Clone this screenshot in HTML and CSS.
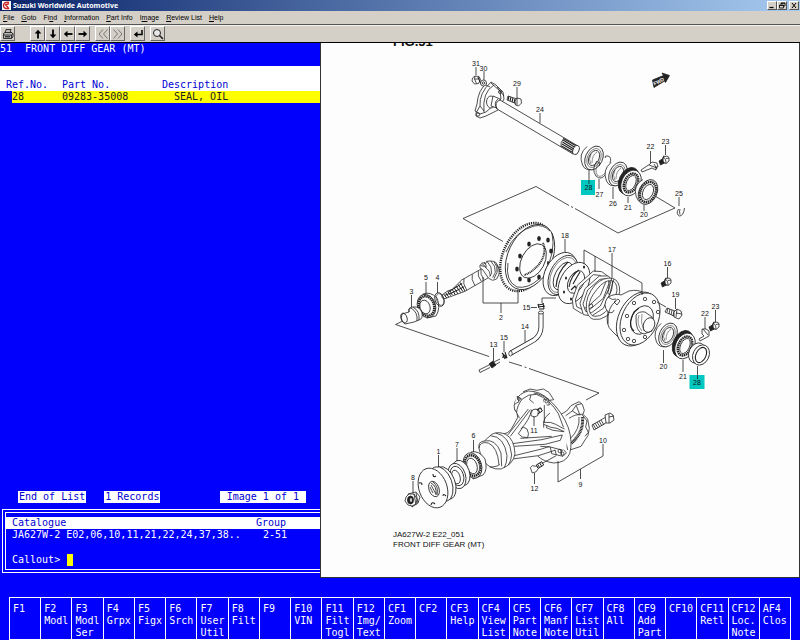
FILE: index.html
```html
<!DOCTYPE html>
<html lang="en">
<head>
  <meta charset="UTF-8">
  <meta name="viewport" content="width=device-width, initial-scale=1.0">
  <title>Suzuki Worldwide Automotive</title>
  <link rel="stylesheet" href="styles.css">
</head>
<body>
  <header class="titlebar">
    <svg class="app-icon" viewBox="0 0 9 9"><rect width="9" height="9" fill="#fff"/><path d="M7 1.5C4 .5 1.500 2 1.500 4.500S4 8 6 7.500M3 4l4-1.500M4 4l3 4" fill="none" stroke="#c22" stroke-width="1.400"/></svg>
    <h1>Suzuki Worldwide Automotive</h1>
    <div class="window-buttons">
      <button aria-label="Minimize"><svg viewBox="0 0 8 7"><path d="M1.500 5.500h4" stroke="#000" stroke-width="1.200"/></svg></button>
      <button aria-label="Restore"><svg viewBox="0 0 8 7"><path d="M3 2.500V1h4v3H5.500M1.500 3h4v3h-4zM1.500 3.500h4M3 1.300h4" fill="none" stroke="#000" stroke-width=".8"/></svg></button>
      <button class="close" aria-label="Close"><svg viewBox="0 0 8 7"><path d="M2 1l4 5M6 1L2 6" stroke="#000"/></svg></button>
    </div>
  </header>

  <nav class="menu">
    <a href="#"><u>F</u>ile</a>
    <a href="#"><u>G</u>oto</a>
    <a href="#">Fi<u>n</u>d</a>
    <a href="#"><u>I</u>nformation</a>
    <a href="#"><u>P</u>art Info</a>
    <a href="#">I<u>m</u>age</a>
    <a href="#"><u>R</u>eview List</a>
    <a href="#"><u>H</u>elp</a>
  </nav>

  <div class="toolbar">
    <div class="tool-group print">
      <button aria-label="Print"><svg viewBox="0 0 12 12"><path d="M3 5l1-3.500h5L8 5M1.500 5.500L3 4.500h7l1 1.500v3l-1.500 1.500h-8zM1.500 7h8L11 5.500M9.500 7v3.500" fill="#bbb" stroke="#222" stroke-width=".9"/><path d="M3 8.800h5" stroke="#000"/></svg></button>
    </div>
    <div class="tool-group">
      <button aria-label="Up"><svg viewBox="0 0 12 12"><path d="M6 10.500V4" stroke="#000" stroke-width="1.800"/><path d="M2.700 5.500L6 1.800l3.300 3.700z"/></svg></button>
      <button aria-label="Down"><svg viewBox="0 0 12 12"><path d="M6 1.500V8" stroke="#000" stroke-width="1.800"/><path d="M2.700 6.500L6 10.200l3.300-3.700z"/></svg></button>
      <button aria-label="Left"><svg viewBox="0 0 12 12"><path d="M10.500 6H4" stroke="#000" stroke-width="1.800"/><path d="M5.500 2.700L1.800 6l3.700 3.300z"/></svg></button>
      <button aria-label="Right"><svg viewBox="0 0 12 12"><path d="M1.500 6H8" stroke="#000" stroke-width="1.800"/><path d="M6.500 2.700L10.200 6 6.500 9.300z"/></svg></button>
    </div>
    <div class="tool-group">
      <button aria-label="Previous"><svg viewBox="0 0 12 12"><path d="M6 1.500L2 6l4 4.500M10.500 1.500L6.500 6l4 4.500" fill="none" stroke="#777"/></svg></button>
      <button aria-label="Next"><svg viewBox="0 0 12 12"><path d="M6 1.500L10 6l-4 4.500M1.500 1.500L5.500 6l-4 4.500" fill="none" stroke="#777"/></svg></button>
    </div>
    <div class="tool-group">
      <button aria-label="Enter"><svg viewBox="0 0 12 12"><path d="M10 2v4.500H4" fill="none" stroke="#000" stroke-width="1.500"/><path d="M5.500 3.500L1.800 6.500l3.700 3z"/></svg></button>
    </div>
    <div class="tool-group">
      <button aria-label="Search"><svg viewBox="0 0 12 12"><circle cx="5" cy="5" r="3.500" fill="#e8e8e8" stroke="#222"/><path d="M7.500 7.500l3.500 3.500" stroke="#222" stroke-width="1.600"/></svg></button>
    </div>
  </div>

  <main class="workspace">
    <section class="terminal">
      <h2><span>51</span><span>FRONT DIFF GEAR (MT)</span></h2>

      <table class="parts">
        <thead>
          <tr><th class="ref">Ref.No.</th><th class="part">Part No.</th><th>Description</th></tr>
        </thead>
        <tbody>
          <tr class="selected"><td class="ref">28</td><td class="part">09283-35008</td><td class="desc">SEAL, OIL</td></tr>
        </tbody>
      </table>

      <div class="status">
        <span>End of List</span>
        <span>1 Records</span>
        <span class="image-count">Image 1 of 1</span>
      </div>

      <form class="callout-box">
        <table class="catalogue">
          <thead><tr><th>Catalogue</th><th class="group">Group</th></tr></thead>
          <tbody><tr><td>JA627W-2 E02,06,10,11,21,22,24,37,38..</td><td class="group">2-51</td></tr></tbody>
        </table>
        <div class="prompt">
          <label for="callout">Callout&gt;</label>
          <input id="callout" type="text" autocomplete="off">
        </div>
      </form>
    </section>

    <section class="drawing">
      <svg viewBox="321 43 478 534" role="img" aria-label="Front diff gear (MT)">
        <defs>
          <g id="bearing">
            <path d="M-7-11.500Q-16-4-11.500 7Q-9 13-1 11.500" class="part-fill"/>
            <ellipse rx="8.500" ry="12.500" transform="rotate(25)" class="part-fill"/>
            <ellipse rx="6.500" ry="10" transform="rotate(25)" class="thin"/>
            <ellipse rx="5" ry="8" transform="rotate(25)" class="part-fill"/>
            <path d="M-3-4Q-6 2-3 6M3-6Q-2-3-2 5" class="thin"/>
          </g>
          <g id="roller">
            <path d="M-5-12.500Q-15-7-12 4Q-9 13-1 12" class="part-fill"/>
            <ellipse rx="9" ry="13" transform="rotate(25)" class="part-fill"/>
            <ellipse rx="7.500" ry="10.500" transform="rotate(25)" class="teeth"/>
            <ellipse rx="5" ry="8" transform="rotate(25)" class="part-fill"/>
          </g>
          <g id="adjuster">
            <ellipse cx="-3" cy="-1" rx="9.500" ry="14" transform="rotate(25)" class="dark-fill"/>
            <ellipse rx="9.500" ry="13.500" transform="rotate(25)" class="part-fill"/>
            <ellipse rx="6.500" ry="10" transform="rotate(25)" class="teeth"/>
            <ellipse rx="4.500" ry="8" transform="rotate(25)" class="part-fill"/>
          </g>
          <g id="screw">
            <path d="M-1-2L-6 1l1.500 4L1 2" class="dark-fill"/>
            <path d="M-2-3L2-4 4-2.500 4 1 1 3.500-2 2z" class="part-fill"/>
            <path d="M-2-3Q1-2 1 3.500M1-1.500l3-.5M-1-4.500Q-4 0-1 4" class="line"/>
          </g>
        </defs>

        <text x="393" y="46" class="fig-title">FIG.51</text>

        <!-- direction mark -->
        <path d="M652.500 80L663.500 75.500 662 73 669.500 75.500 665.500 82.500 664.500 81 654 87.500z" class="dark-fill"/>
        <text class="fwd" transform="translate(659.500 83) rotate(-26)">FWD</text>

        <!-- phantom outlines -->
        <path d="M503 241.500L463 218.500 536 186.500 569 205.500M571 206.500l2 1M575 208.500L618 233 675 208 650 193M405 320L395.500 324.500 489 356.500M509 362l13 4M524.500 367l2 .6M529 368.500L599 393 586 400" class="line"/>

        <!-- axle shaft 24 -->
        <path d="M491 82l5 3 7 7 1 7-6 11-12 6-6 2-4-2 0-3 4-7q-1-13 11-24z" class="part-fill"/>
        <path d="M487 83Q478 90 477 104l-2 7 5 3 6-2 15-13-1-8-9-8M484 112Q482 92 494 85M480 106l4 5M497 87l7 9" class="line"/>
        <circle cx="478" cy="114.500" r="1.700" class="line"/>
        <circle cx="500" cy="92" r="1.500" class="line"/>
        <ellipse cx="491" cy="102" rx="4.500" ry="6" class="part-fill"/>
        <path d="M493 96l7 3v10l-9-3z" class="part-fill"/>
        <path d="M500 100L578 146Q573 147 573 154L497 109Q494 102 500 100z" class="part-fill"/>
        <path d="M498 99Q493 103 497 109M564 138Q560 142 561 147" class="line"/>
        <path d="M563 140l13 8M562.500 142l13 8M562 144l12 7M561.500 146l12 7M563.500 138.500l12 7" class="thick"/>
        <ellipse cx="576" cy="150" rx="3" ry="4.800" transform="rotate(20 576 150)" class="part-fill"/>
        <path d="M472.500 78l2.500-2 4 .5 1.500 3-2 4-4 .5-2.500-3zM475 76l-.5 3 2 4.500M474.500 79l5 0" class="part-fill"/>
        <path d="M478 77l3 7" class="thick"/>
        <circle cx="483.500" cy="83" r="3" class="part-fill"/>
        <circle cx="483.500" cy="83" r="1.200" class="line"/>
        <path d="M486 85l4 2M508 96l9 3v5l-10-4z" class="part-fill"/>
        <path d="M509 96l-1 4M511 97l-1 4M513 98l-1 4M515 99l-1 4" class="thick"/>
        <path d="M515 101l2-3 4 1 .5 4-3 3-3-1zM517 98l0 7" class="part-fill"/>

        <!-- output side: 28, 27, 26, 21, 20 -->
        <use href="#bearing" x="594" y="158"/>
        <path d="M597 161Q591 169 596 176Q601 181 606 174M598 162l2 1-1 3M605 158q0-3 3-2 4 1 2 7" class="line"/>
        <path d="M598.500 163Q594 170 597.500 175.500Q601 178 605 173" class="thin"/>
        <use href="#bearing" x="618" y="174"/>
        <use href="#adjuster" x="631" y="183"/>
        <use href="#roller" x="648" y="192"/>
        <path d="M678.500 209q-3 5 1 7 4 0 5-8M680 209q-1 3 0 5.500" class="line"/>
        <path d="M641 170l1 2 10-4 4 2 0-3 2 0-1-4-5-1-2 2zM649 165l8 3M654 164l3 5" class="part-fill"/>
        <use href="#screw" x="665" y="160"/>

        <!-- ring gear and pinion 2 -->
        <ellipse cx="526" cy="257" rx="23" ry="36" transform="rotate(25 526 257)" class="gear-teeth"/>
        <ellipse cx="530" cy="257" rx="22" ry="34.500" transform="rotate(25 530 257)" class="part-fill"/>
        <path d="M552 233Q556 252 545 271M550 231Q543 224 534 226Q515 231 506 252M508 263Q505 281 517 287Q528 289 539 279" class="line"/>
        <ellipse cx="533" cy="261" rx="11.500" ry="18.500" transform="rotate(28 533 261)" class="part-fill"/>
        <path d="M543 243Q547 252 540 263Q532 273 524 275" class="gear-inner"/>
        <g class="holes">
          <ellipse cx="529" cy="244" rx="1.800" ry="2.500"/><ellipse cx="539" cy="238.500" rx="1.800" ry="2.500"/>
          <ellipse cx="548" cy="240" rx="1.800" ry="2.500"/><ellipse cx="551" cy="251" rx="1.800" ry="2.500"/>
          <ellipse cx="520" cy="256" rx="1.800" ry="2.500"/><ellipse cx="548" cy="263" rx="1" ry="2"/>
          <ellipse cx="517" cy="269" rx="1.800" ry="2.500"/><ellipse cx="520" cy="279" rx="1.800" ry="2.500"/>
          <ellipse cx="529" cy="280" rx="1.800" ry="2.500"/><ellipse cx="539" cy="277" rx="1.800" ry="2.500"/>
        </g>
        <g class="traced" transform="translate(395 220) scale(.3333)">
          <path d="M141 225L158 213 172 208 200 180 262 145 285 140 282 172 262 184 210 214 180 225 150 236Q138 236 141 225z"/>
          <path d="M146 222l9 12M152 218l9 13M158 214l9 13M164 211l8 14M171 207l10 18M177 203l12 19M183 198l14 20M189 193l15 22M195 187l15 26M160 216l42-26M164 222l44-22M150 226l14-6" class="heavy"/>
          <path d="M207 176q-5 14 8 34M232 163q-5 14 8 34M250 153q-4 14 9 31M258 148q-4 14 9 31"/>
          <path d="M255 136l8-8 9 3 3-7 11-1 9 1 7 3 7 11 5 12-3 15-6 12-12 4-12-6-9-13-9-13-8-5z"/>
          <path d="M260 130l14 12M268 126l7 14M276 124q16 15 14 36l-6 10M287 123q16 14 14 34l-8 16M297 125q12 14 9 32l-9 19M305 133q7 12 4 22M256 136q14 2 20 10 10 8 10 22"/>
        </g>

        <!-- 5, 4, 3 -->
        <path d="M423 294Q430 291 437 298Q441 308 436 316L427 318Z" class="part-fill"/>
        <ellipse cx="426.500" cy="306" rx="9" ry="12" transform="rotate(-18 426.500 306)" class="part-fill"/>
        <ellipse cx="426.500" cy="306" rx="7.500" ry="10" transform="rotate(-18 426.500 306)" class="teeth"/>
        <ellipse cx="425" cy="307" rx="5" ry="7" transform="rotate(-18 425 307)" class="part-fill"/>
        <ellipse cx="439.500" cy="299.500" rx="4.500" ry="7" transform="rotate(-18 439.500 299.500)" class="line"/>
        <ellipse cx="440" cy="299.500" rx="3.500" ry="6" transform="rotate(-18 440 299.500)" class="thin"/>
        <path d="M402 314l7-2q-1-5 4-5 7-1 9 6 1 6-3 7l-5 2-9 2q-5-3-3-10z" class="part-fill"/>
        <ellipse cx="404" cy="318" rx="3" ry="5" transform="rotate(-20 404 318)" class="line"/>
        <path d="M409 312q-1-4 2-4 7 4 6 13M413 307q7 4 6 13" class="line"/>

        <!-- breather hose 13, 14, 15 -->
        <path d="M541 313V327Q541 335 534 340L511 353" class="hose"/>
        <path d="M541 313V327Q541 335 534 340L511 353" class="hose-in"/>
        <ellipse cx="541" cy="312.500" rx="2.500" ry="1.500" class="part-fill"/>
        <ellipse cx="510.500" cy="353.500" rx="1.700" ry="2.500" class="part-fill"/>
        <path d="M538 305l6-1M538 307l7-1M539 309l5 0M538 304l1 4M543 303l1 6M502 353l5 5M505 352l2 6M502 357l5 1M503 355l2 4" class="thick"/>
        <path d="M479 370l10-5M480 372.500l10-5M479 370l1 2.500M494 362l6-3M495 365l5-3" class="line"/>
        <path d="M489 364l4-3 3 4-4 3zM491 362l3 4" class="dark-fill"/>

        <!-- 18 and shim stack 17 -->
        <ellipse cx="560" cy="274" rx="15" ry="23" transform="rotate(27 560 274)" class="part-fill"/>
        <ellipse cx="563" cy="275" rx="13" ry="21" transform="rotate(27 563 275)" class="part-fill"/>
        <ellipse cx="563" cy="275" rx="11.500" ry="19" transform="rotate(27 563 275)" class="thin"/>
        <ellipse cx="563" cy="276" rx="8" ry="15" transform="rotate(27 563 276)" class="line"/>
        <path d="M568 262Q557 272 556 287" class="thick"/>
        <ellipse cx="574" cy="283" rx="14" ry="22" transform="rotate(27 574 283)" class="part-fill"/>
        <ellipse cx="576" cy="282" rx="7.500" ry="12" transform="rotate(27 576 282)" class="line"/>
        <path d="M569 287Q571 275 579 270M571 290l4-4 2 4M580 272l-3 5-4 7" class="thick"/>
        <g class="holes">
          <ellipse cx="566" cy="278" rx="1" ry="1.500"/><ellipse cx="564" cy="292" rx="1" ry="1.500"/>
          <ellipse cx="584" cy="267" rx="1" ry="1.500"/><ellipse cx="571" cy="299" rx="1" ry="1.500"/>
        </g>
        <g class="traced" transform="translate(540 240) scale(.3333)">
          <path fill-rule="evenodd" d="M97 178L112 136 160 93 185 95 203 108 207 130 190 175 145 212 124 220 100 205zM106 180l4 20 16 8 15-6 40-36 16-39-4-13-14-8-19-2-40 36z"/>
          <path fill-rule="evenodd" d="M120 190L135 146 178 108 205 108 218 122 215 150 190 205 155 228 130 224zM129 192l8 22 18 4 26-20 25-50 2-24-8-8-20 2-37 32z"/>
          <path fill-rule="evenodd" d="M139 205Q136 170 165 135 190 110 218 115 240 122 239 155 232 200 200 228 180 242 160 238 142 232 139 205zM147 200q0 28 18 29 14 2 30-12 30-28 36-66 0-28-18-29-20-2-42 26-24 28-24 52z"/>
          <path d="M203 160l13-48M209 164l12-46M203 160l6 4M145 198l11-7 3 9-11 6"/>
        </g>

        <!-- differential case -->
        <path d="M608 297Q616 293 621 295L629 291Q638 289 644 293L640 340 624 343 612 331Q605 325 608 312Q602 305 608 297z" class="part-fill"/>
        <path d="M616 301Q607 307 608 324M608 297Q613 301 616 299M608 312q5 2 6-2M614 302l4-3 2 2-3 4z" class="line"/>
        <ellipse cx="637" cy="319" rx="18.500" ry="28.500" transform="rotate(25 637 319)" class="part-fill"/>
        <ellipse cx="640" cy="319" rx="18" ry="27.500" transform="rotate(25 640 319)" class="part-fill"/>
        <g class="bolt-holes">
          <circle cx="645" cy="299" r="1.700"/><circle cx="654" cy="302" r="1.700"/><circle cx="634" cy="303" r="1.700"/>
          <circle cx="627" cy="316" r="1.700"/><circle cx="658" cy="312" r="1.700"/><circle cx="624" cy="330" r="1.700"/>
          <circle cx="628" cy="339" r="1.700"/><circle cx="634" cy="341" r="1.700"/><circle cx="645" cy="337" r="1.700"/>
        </g>
        <ellipse cx="642" cy="320" rx="10.500" ry="15" transform="rotate(25 642 320)" class="line"/>
        <path d="M634 331Q627 325 634 312l5-4" class="thick"/>
        <path d="M636 315q3-4 9-3l7 5v14l-8 3q-9-1-8-19z" class="part-fill"/>
        <ellipse cx="649" cy="325" rx="5.500" ry="7.500" transform="rotate(22 649 325)" class="part-fill"/>
        <path d="M639 315q-3 9 3 16M642 314q-2 8 2 17" class="thin"/>
        <path d="M657 302l9 5" class="line"/>
        <use href="#screw" x="667" y="282"/>
        <path d="M667 308l8 3-1 5-9-4zM668 308l-1 4M670 309l-1 5M672 310l-1 5M674 311l-1 5" class="part-fill"/>
        <path d="M674 312l3-3 4 2 1 4-3 4-5-2zM677 309l-1 8M676 313l6 1" class="part-fill"/>
        <use href="#bearing" x="668" y="335"/>
        <use href="#adjuster" x="685" y="346"/>
        <ellipse cx="697" cy="353" rx="8" ry="10.500" transform="rotate(25 697 353)" class="part-fill"/>
        <ellipse cx="701" cy="355" rx="8" ry="10.500" transform="rotate(25 701 355)" class="part-fill"/>
        <ellipse cx="701" cy="355" rx="5" ry="8" transform="rotate(25 701 355)" class="thick"/>
        <path d="M699 339l1 2 9-5V331l-3-2h-4v5l2 2zM703 329l5 6" class="part-fill"/>
        <use href="#screw" x="715" y="326"/>

        <!-- carrier housing 9 -->
        <g class="traced" transform="translate(475 385) scale(.3333)">
          <path d="M255 90L275 78 288 62 312 50 322 58 328 76 324 88 338 102 343 130 339 152 330 165 318 184 288 194 260 150z"/>
          <path d="M272 92l20-14 12-18 16-4M292 78l16 10 16 0M304 62l10 26M282 100q22-14 34-10M322 90l14 18-4 18 8 16-10 12"/>
          <path d="M322 96Q328 140 288 176" class="ring-teeth"/>
          <path d="M312 96q4 36-27 66" />
          <path d="M145 20L165 12 186 16 205 12 222 22 236 44 200 50z"/>
          <path d="M187 212L130 92Q112 74 120 50 132 24 160 18 195 18 222 44 262 80 280 128 294 172 284 206 272 234 236 234 205 230 187 212z"/>
          <path d="M124 88Q126 60 142 42 160 26 184 28 224 42 250 86 270 126 273 172L278 195M176 24Q204 28 224 48"/>
          <path d="M118 58l14-8-6-16M126 34l14 8M168 30l-4 14 12 10M206 44l14-2 3 18-14 0z"/>
          <path d="M86 148L104 140 124 112 168 54 200 68 208 44 226 84 236 112 268 128 276 170 270 214 190 212 110 232 84 250z" class="no-line"/>
          <path d="M84 148Q100 144 108 134L128 98Q128 84 120 74M98 150L160 72M106 154L166 74M170 74Q164 104 138 132M200 70Q180 74 172 78M208 60L208 112M225 84Q208 96 206 110L206 128M130 146L144 126 156 132Q164 146 158 158L142 156z"/>
          <path d="M206 112q24-2 36 6l26 14M206 118q24 12 40 12l22 10M216 122l-2 6 20 8 32 4M112 176L200 164 262 150M118 184L210 178 256 166 262 150M136 160L230 154M110 214L200 192 224 184M112 222L190 212 240 196M196 184l30 2 38 10M226 186l4 20 34 8 10-10-8-10M240 194l4 16M258 194l2 16"/>
          <circle cx="214" cy="50" r="4"/><circle cx="132" cy="42" r="4"/><circle cx="254" cy="198" r="5"/><circle cx="262" cy="206" r="5"/>
          <path d="M12 190Q8 170 28 168L50 148Q70 138 92 148 118 162 120 206 116 238 78 252 60 254 46 246 Q20 232 12 190z"/>
          <path d="M12 190Q14 168 40 174 68 186 72 240M28 168Q62 160 78 204L80 244M46 152Q88 154 96 212 96 234 88 248M62 144Q104 152 110 210 108 230 100 240M44 246Q68 246 74 238"/>
          <path d="M200 236L244 212"/>
          <path d="M178 80l18-12 6 10-18 12zM183 76l6 12M189 72l6 12" class="heavy"/>
          <path d="M168 84l6-10 10-2 6 8-2 12-10 4-10-4z"/>
          <path d="M184 240l16-10 6 10-16 10zM188 238l6 10M194 234l6 10" class="heavy"/>
          <path d="M166 248l6-6 12 2 6 6-6 10-12 4z"/>
        </g>
        <path d="M592 425L606 417 609 421 594 430zM593 424l3 5M595 423l3 5M597 422l3 5M599 421l3 5M601 420l3 5" class="part-fill"/>
        <path d="M605 415l5-2 3 2 1 5-4 3-4 0zM609 414l0 9M609 417l5-1" class="part-fill"/>

        <!-- 6, 7, 1, 8 -->
        <path d="M471 452Q479 450 485 459Q488 470 483 475L473 479Z" class="part-fill"/>
        <ellipse cx="472.500" cy="465.500" rx="9" ry="13" transform="rotate(-18 472.500 465.500)" class="part-fill"/>
        <ellipse cx="472.500" cy="465.500" rx="7.500" ry="10.500" transform="rotate(-18 472.500 465.500)" class="teeth"/>
        <ellipse cx="472" cy="466" rx="5" ry="8" transform="rotate(-18 472 466)" class="part-fill"/>
        <ellipse cx="461" cy="473" rx="8.500" ry="13" transform="rotate(-18 461 473)" class="part-fill"/>
        <ellipse cx="457" cy="476" rx="8.500" ry="13" transform="rotate(-18 457 476)" class="part-fill"/>
        <ellipse cx="457" cy="476" rx="6.500" ry="10" transform="rotate(-18 457 476)" class="line"/>
        <ellipse cx="456" cy="477" rx="4" ry="7" transform="rotate(-18 456 477)" class="line"/>
        <ellipse cx="445" cy="483" rx="10" ry="17" transform="rotate(-20 445 483)" class="part-fill"/>
        <ellipse cx="441" cy="484" rx="11" ry="18" transform="rotate(-20 441 484)" class="part-fill"/>
        <ellipse cx="433" cy="488" rx="14" ry="20.500" transform="rotate(-20 433 488)" class="part-fill"/>
        <ellipse cx="434" cy="489" rx="5" ry="8" transform="rotate(-20 434 489)" class="part-fill"/>
        <path d="M431 483q6 3 5 12M433 482q6 5 4 13M430 487l3 6M431 485l5 9" class="line"/>
        <path d="M433 474q0 4 3 2M419 483q3-1 3 2M443 496q0-3 3 0M431 505q1-4 4-1" class="thick"/>
        <path d="M408 494l8-2 4 5-2 6-6 4z" class="part-fill"/>
        <path d="M406 497l3-3 5 0 3 5-1 5-4 2-4-1-3-4z" class="part-fill"/>
        <ellipse cx="410.500" cy="500" rx="3" ry="4" class="dark-fill"/>
        <ellipse cx="411" cy="500" rx="1.200" ry="2" fill="#ccc"/>
        <path d="M414 494l2 11M416 493l2 10" class="line"/>

        <!-- leaders -->
        <path class="line" d="M476 67v8M484 71v9M517 87v11M540 113v10M589 170v10M599 179v10M613 187v12M628 197v6M644 205v6M650.500 151v12M665.500 145v10M679 197v9M565 239v13M584 264V250L642 283v12M595 256v16M612 253v24M667.500 267v11M675.500 298v11M705 317v12M715.500 310v12M663.500 350v13M683 360v12M697.500 366v9M483 277v26h35v-13M501 303v10M426 282v12M437.500 282v11M411.500 295v12M531 307.500h6M542 303v-5h14M525 330v12M504 341v11M493.500 348v13M534 416v10M603 456v-12M603 456L558 482v-21M580.500 469v10M473.500 440v12M457 448v13M438.500 455v12M413 481v12M534.500 473v11"/>

        <!-- highlighted callouts -->
        <rect x="581" y="180" width="14" height="15" class="hit"/>
        <rect x="689.500" y="375" width="15" height="14" class="hit"/>
        <path d="M589 180v4M697.500 375v4" class="line"/>

        <g class="numbers">
          <text x="476" y="66">31</text><text x="483.500" y="71">30</text><text x="517" y="86">29</text>
          <text x="540" y="112">24</text><text x="588.500" y="190">28</text><text x="599.500" y="197">27</text>
          <text x="613" y="206">26</text><text x="628" y="210">21</text><text x="644" y="217">20</text>
          <text x="650.500" y="149">22</text><text x="665.500" y="144">23</text><text x="679" y="196">25</text>
          <text x="565" y="238">18</text><text x="612" y="252">17</text><text x="667.500" y="266">16</text>
          <text x="675.500" y="297">19</text><text x="705" y="316">22</text><text x="715.500" y="309">23</text>
          <text x="663.500" y="369">20</text><text x="683" y="379">21</text><text x="697" y="385">28</text>
          <text x="426" y="280">5</text><text x="437.500" y="280">4</text><text x="411.500" y="294">3</text>
          <text x="501" y="320">2</text><text x="526.500" y="310">15</text><text x="525" y="329">14</text>
          <text x="504" y="340">15</text><text x="493.500" y="347">13</text><text x="534" y="433">11</text>
          <text x="603" y="443">10</text><text x="473.500" y="438">6</text><text x="457" y="447">7</text>
          <text x="438.500" y="454">1</text><text x="413" y="480">8</text><text x="534.500" y="491">12</text>
          <text x="580.500" y="487">9</text>
        </g>

        <text x="393" y="537" class="caption">JA627W-2 E22_051</text>
        <text x="393" y="547" class="caption">FRONT DIFF GEAR (MT)</text>
      </svg>
    </section>
  </main>

  <footer class="keys">
    <button>F1</button>
    <button>F2<br>Modl</button>
    <button>F3<br>Modl<br>Ser</button>
    <button>F4<br>Grpx</button>
    <button>F5<br>Figx</button>
    <button>F6<br>Srch</button>
    <button>F7<br>User<br>Util</button>
    <button>F8<br>Filt</button>
    <button>F9</button>
    <button>F10<br>VIN</button>
    <button>F11<br>Filt<br>Togl</button>
    <button>F12<br>Img/<br>Text</button>
    <button>CF1<br>Zoom</button>
    <button>CF2</button>
    <button>CF3<br>Help</button>
    <button>CF4<br>View<br>List</button>
    <button>CF5<br>Part<br>Note</button>
    <button>CF6<br>Manf<br>Note</button>
    <button>CF7<br>List<br>Util</button>
    <button>CF8<br>All</button>
    <button>CF9<br>Add<br>Part</button>
    <button>CF10</button>
    <button>CF11<br>Retl</button>
    <button>CF12<br>Loc.<br>Note</button>
    <button>AF4<br>Clos</button>
  </footer>
</body>
</html>
```
FILE: styles.css
```css
* {
  box-sizing: border-box;
}
body {
  margin: 0;
  background-color: #0000fc;
  color: #fff;
  font-family: "DejaVu Sans Mono", "Liberation Mono", monospace;
  font-size: 10px;
  line-height: 12px;
}
button {
  font: inherit;
  color: inherit;
  margin: 0;
  padding: 0;
}

/* Window chrome */
.titlebar {
  display: flex;
  align-items: center;
  gap: 2px;
  height: 11px;
  padding: 0 1px 0 2px;
  background: linear-gradient(to right, #0a246a, #a6caf0);
}
.app-icon {
  width: 9px;
  height: 9px;
}
.titlebar h1 {
  flex: 1;
  margin: 0;
  font-family: "Noto Sans", sans-serif;
  font-size: 7px;
  font-weight: bold;
  line-height: 11px;
}
.window-buttons {
  display: flex;
}
.window-buttons button {
  display: flex;
  width: 10px;
  height: 9px;
  background-color: #d4d0c8;
  border: 1px solid;
  border-color: #fff #555 #555 #fff;
}
.window-buttons .close {
  margin-left: 2px;
}
.window-buttons svg {
  width: 8px;
  height: 7px;
}
.menu {
  display: flex;
  gap: 7px;
  height: 13px;
  padding-left: 3px;
  background-color: #d4d0c8;
  font-family: "Liberation Sans", sans-serif;
  font-size: 7px;
  line-height: 13px;
}
.menu a {
  color: #000;
  text-decoration: none;
}
.toolbar {
  display: flex;
  align-items: center;
  gap: 5px;
  height: 19px;
  background-color: #d4d0c8;
  border-top: 1px solid #555;
  border-bottom: 1px solid #000;
  box-shadow: inset 0 1px #f4f2ee;
}
.tool-group {
  display: flex;
}
.tool-group.print {
  margin-right: 10px;
}
.tool-group button {
  display: flex;
  align-items: center;
  justify-content: center;
  width: 15px;
  height: 15px;
  background-color: #d4d0c8;
  border: 1px solid;
  border-color: #fff #666 #666 #fff;
}
.tool-group svg {
  width: 12px;
  height: 12px;
}

/* Main area */
.workspace {
  display: grid;
  grid-template-columns: 2fr 3fr;
}
.terminal {
  display: flex;
  flex-direction: column;
  min-width: 0;
}
.terminal h2 {
  display: flex;
  gap: 13px;
  height: 23px;
  margin: 0;
  font-size: 10px;
  font-weight: normal;
}
.parts,
.catalogue {
  width: 100%;
  border-collapse: collapse;
}
.parts th,
.parts td,
.catalogue th,
.catalogue td {
  padding: 0;
  font-weight: normal;
  text-align: left;
  white-space: nowrap;
}
.parts th {
  height: 25px;
  vertical-align: bottom;
  background-color: #fff;
  color: #0000d0;
}
.parts .ref {
  width: 62px;
  padding-left: 6px;
}
.parts .part {
  width: 100px;
}
.selected td {
  height: 12px;
  background-color: #ff0;
  color: #222;
}
.parts .selected .ref {
  padding-left: 12px;
  background: linear-gradient(to right, #0000fc 12px, #ff0 12px);
}
.parts .selected .desc {
  padding-left: 12px;
}
.status {
  display: flex;
  gap: 18px;
  margin-top: auto;
  padding: 0 14px 6px 18px;
}
.status span {
  padding: 0 1px;
  background-color: #fff;
  color: #0000d0;
}
.status .image-count {
  margin-left: auto;
  padding: 0 7px;
}
.callout-box {
  margin: 0 0 5px 2px;
  padding: 4px 0 3px;
  border: 4px double #fff;
  border-right: 0;
}
.catalogue th {
  background-color: #fff;
  color: #0000d0;
}
.catalogue th:first-child,
.catalogue td:first-child {
  padding-left: 6px;
}
.catalogue .group {
  width: 64px;
}
.catalogue td.group {
  padding-left: 7px;
}
.prompt {
  display: flex;
  gap: 7px;
  padding: 13px 6px 0;
}
.prompt input {
  flex: 1;
  min-width: 0;
  height: 12px;
  padding: 0;
  border: 0;
  outline: 0;
  background: linear-gradient(#ff0, #ff0) no-repeat left / 6px 12px;
  color: #fff;
  font: inherit;
}

/* Parts drawing */
.drawing {
  background-color: #fdfdfd;
  border: 1px solid #333;
  border-top: 0;
}
.drawing > svg {
  display: block;
  width: 100%;
  height: auto;
}
.drawing text {
  fill: #111;
  font-family: "Liberation Sans", sans-serif;
}
.drawing .fig-title {
  font-size: 13px;
  font-weight: bold;
}
.drawing .caption {
  font-size: 8px;
}
.numbers {
  font-size: 7px;
  text-anchor: middle;
}
.drawing .fwd {
  fill: #fff;
  font-size: 5px;
  font-weight: bold;
  text-anchor: middle;
}
.line,
.thin,
.thick,
.part-fill,
.dark-fill {
  fill: none;
  stroke: #222;
  stroke-width: 0.8;
  stroke-linejoin: round;
}
.thin {
  stroke-width: 0.5;
}
.thick {
  stroke-width: 1.1;
}
.part-fill {
  fill: #fdfdfd;
}
.dark-fill {
  fill: #222;
}
/* parts drawn at three times the size */
.traced {
  fill: none;
  stroke: #222;
  stroke-width: 2.3;
  stroke-linejoin: round;
}
.traced path[d$="z"] {
  fill: #fdfdfd;
}
.traced .no-line {
  stroke: none;
}
.traced .heavy {
  stroke-width: 3;
}
.traced .ring-teeth {
  stroke-width: 9;
  stroke-dasharray: 3 1.5;
}
.teeth {
  fill: none;
  stroke: #222;
  stroke-width: 2.5;
  stroke-dasharray: 1.5 0.6;
}
.gear-teeth {
  fill: #fdfdfd;
  stroke: #222;
  stroke-width: 2.5;
  stroke-dasharray: 1.2 1;
}
.gear-inner {
  fill: none;
  stroke: #222;
  stroke-width: 2;
  stroke-dasharray: 1 0.7;
}
.hose {
  fill: none;
  stroke: #222;
  stroke-width: 5;
}
.hose-in {
  fill: none;
  stroke: #fdfdfd;
  stroke-width: 3.4;
}
.holes {
  fill: #222;
}
.bolt-holes {
  fill: #fdfdfd;
  stroke: #222;
  stroke-width: 0.8;
}
.hit {
  fill: #00c8c0;
}

/* Function keys */
.keys {
  display: grid;
  grid-template-columns: repeat(25, minmax(0, 1fr));
  margin: 19px 9px 0;
  border: 1px solid #fff;
  border-right: 0;
}
.keys button {
  display: flex;
  align-items: flex-start;
  min-height: 41px;
  padding: 5px 0 0 3px;
  overflow: hidden;
  background-color: #0000fc;
  border: 0;
  border-right: 1px solid #fff;
  text-align: left;
}
```
